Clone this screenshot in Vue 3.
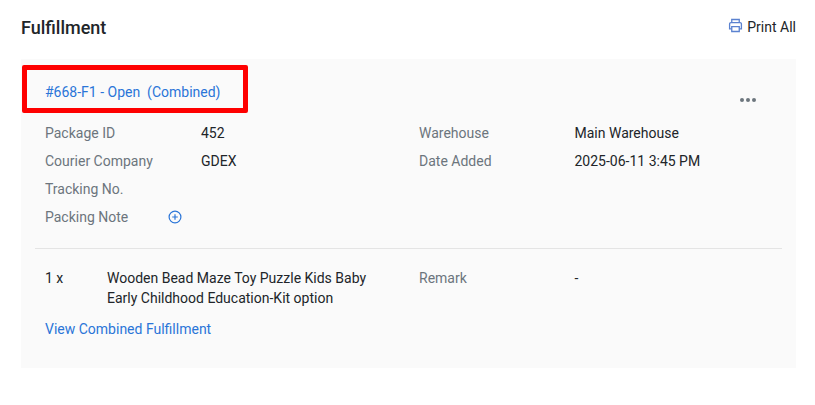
<template>
  <div class="page">
    <header class="top">
      <h2 class="title">Fulfillment</h2>
      <a class="print">
        <svg class="print-icon" viewBox="0 0 16 16" fill="none" stroke="currentColor" stroke-width="1.4">
          <path d="M4 5V1.6h8V5" />
          <path d="M4 11.5H1.7V6.4A1.4 1.4 0 0 1 3.1 5h9.8a1.4 1.4 0 0 1 1.4 1.4v5.1H12" />
          <path d="M4 9.2h8v5.2H4z" />
        </svg>
        <span>Print All</span>
      </a>
    </header>

    <section class="card">
      <div class="highlight"></div>

      <div class="card-head">
        <span class="link">#668-F1 - Open &nbsp;(Combined)</span>
        <span class="more"><i></i><i></i><i></i></span>
      </div>

      <div class="info">
        <div class="info-col">
          <div v-for="row in leftRows" :key="row.label" class="row left">
            <span class="label">{{ row.label }}</span>
            <span class="value">{{ row.value }}</span>
          </div>
          <div class="row note">
            <span class="label">Packing Note</span>
            <svg class="plus" viewBox="0 0 14 14" fill="none" stroke="currentColor" stroke-width="1.2">
              <circle cx="7" cy="7" r="5.9" />
              <path d="M7 4.2v5.6M4.2 7h5.6" />
            </svg>
          </div>
        </div>
        <div class="info-col">
          <div v-for="row in rightRows" :key="row.label" class="row right">
            <span class="label">{{ row.label }}</span>
            <span class="value">{{ row.value }}</span>
          </div>
        </div>
      </div>

      <div class="divider"></div>

      <div class="item">
        <span class="qty">1 x</span>
        <span class="name">Wooden Bead Maze Toy Puzzle Kids Baby Early Childhood Education-Kit option</span>
        <span class="label remark">Remark</span>
        <span class="value">-</span>
      </div>

      <a class="link view">View Combined Fulfillment</a>
    </section>
  </div>
</template>

<script setup>
const leftRows = [
  { label: 'Package ID', value: '452' },
  { label: 'Courier Company', value: 'GDEX' },
  { label: 'Tracking No.', value: '' }
]

const rightRows = [
  { label: 'Warehouse', value: 'Main Warehouse' },
  { label: 'Date Added', value: '2025-06-11 3:45 PM' }
]
</script>

<style>
body {
  background: #fff;
}
</style>

<style scoped>
.page {
  width: 815px;
  height: 405px;
  padding: 15px 19px 0 21px;
  box-sizing: border-box;
  font-family: Roboto, "Liberation Sans", sans-serif;
  font-size: 14px;
  line-height: 20px;
  color: #212529;
}

.top {
  display: flex;
  justify-content: space-between;
  align-items: center;
  height: 24px;
  margin-bottom: 20px;
}

.title {
  margin: 0;
  padding-top: 2px;
  font-size: 18px;
  font-weight: 500;
  line-height: 24px;
}

.print {
  display: flex;
  align-items: center;
  gap: 4px;
}

.print-icon {
  width: 15px;
  height: 15px;
  margin-top: -3px;
  color: #5b82d0;
}

.card {
  position: relative;
  height: 309px;
  background: #fafafa;
  padding: 23px 14px 0;
  box-sizing: border-box;
}

.highlight {
  position: absolute;
  left: 1px;
  top: 6px;
  width: 226px;
  height: 48px;
  box-sizing: border-box;
  border: 5px solid #fe0000;
  border-radius: 2px;
}

.card-head {
  display: flex;
  justify-content: space-between;
  padding: 0 10px;
  height: 37px;
}

.link {
  color: #2a75d8;
}

.more {
  display: flex;
  gap: 2px;
  height: 4px;
  margin: 16px 16px 0 0;
}

.more i {
  width: 4px;
  height: 4px;
  border-radius: 50%;
  background: #6c757d;
}

.info {
  display: grid;
  grid-template-columns: 374px 1fr;
  padding: 0 10px;
  height: 129px;
}

.row {
  display: flex;
  height: 28px;
  align-items: center;
}

.label {
  color: #6c757d;
}

.left .label {
  width: 156px;
}

.right .label {
  width: 155.5px;
}

.note .label {
  width: 123px;
}

.plus {
  width: 14px;
  height: 14px;
  color: #2a75d8;
}

.divider {
  height: 1px;
  background: #e4e4e4;
}

.item {
  display: grid;
  grid-template-columns: 62px 312px 155.5px 1fr;
  padding: 19px 10px 0;
}

.name {
  width: 280px;
}

.view {
  display: block;
  margin: 11px 10px 0;
}
</style>
